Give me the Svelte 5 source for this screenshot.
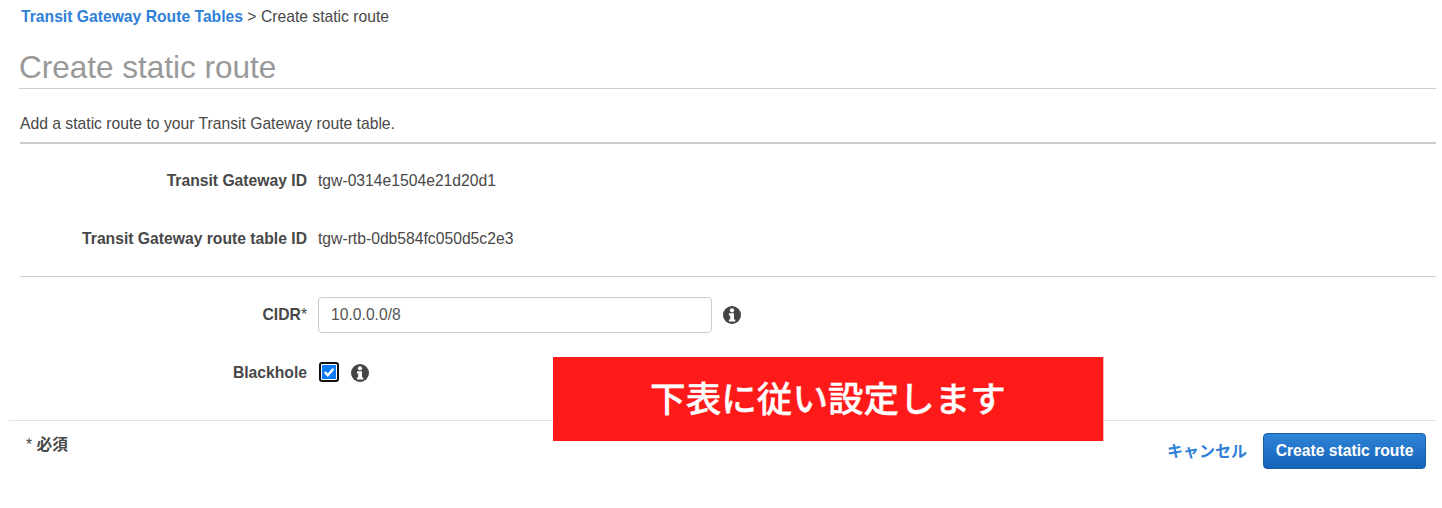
<script>
  const details = [
    { label: 'Transit Gateway ID', value: 'tgw-0314e1504e21d20d1' },
    { label: 'Transit Gateway route table ID', value: 'tgw-rtb-0db584fc050d5c2e3' }
  ]
</script>

{#snippet info()}
  <svg class="info" viewBox="0 0 18 18" width="18" height="18" aria-hidden="true">
    <circle cx="9" cy="9" r="9" fill="#444" />
    <circle cx="9" cy="4.3" r="2.1" fill="#fff" />
    <path d="M5.9 7.3h5.1v6.1h1.3v2.1H5.9v-2.1h1.3V9.4H5.9z" fill="#fff" />
  </svg>
{/snippet}

<main>
  <nav><a href="#top">Transit Gateway Route Tables</a> &gt; Create static route</nav>
  <h1>Create static route</h1>
  <p class="desc">Add a static route to your Transit Gateway route table.</p>

  <section class="details">
    {#each details as row}
      <div class="row">
        <span class="label">{row.label}</span>
        <span class="value">{row.value}</span>
      </div>
    {/each}
  </section>

  <section class="fields">
    <div class="row">
      <span class="label">CIDR<span class="star">*</span></span>
      <input type="text" value="10.0.0.0/8" />
      {@render info()}
    </div>
    <div class="row check">
      <span class="label">Blackhole</span>
      <span class="box">
        <svg viewBox="0 0 14 14" width="14" height="14" aria-hidden="true">
          <path d="M2.8 7.2l3 3L11.4 3.8" fill="none" stroke="#fff" stroke-width="2.4" />
        </svg>
      </span>
      {@render info()}
    </div>
  </section>

  <footer>
    <span class="required"><span class="star">*</span> 必須</span>
    <div class="actions">
      <a class="cancel" href="#top">キャンセル</a>
      <button type="button">Create static route</button>
    </div>
  </footer>

  <div class="banner">下表に従い設定します</div>
</main>

<style>
  :global(body) {
    background: #fff;
  }
  main {
    position: relative;
    height: 508px;
    box-sizing: border-box;
    padding: 0 6px 0 9px;
    font-family: "Liberation Sans", "Noto Sans CJK JP", sans-serif;
    font-size: 15.7px;
    color: #484848;
  }
  a {
    color: #2f80d8;
    font-weight: 700;
    text-decoration: none;
  }
  nav {
    height: 33px;
    line-height: 33px;
    padding-left: 12px;
  }
  h1 {
    margin: 0 0 0 10px;
    height: 56px;
    box-sizing: border-box;
    padding-top: 16px;
    line-height: 37px;
    font-size: 31.5px;
    font-weight: 400;
    color: #999;
    border-bottom: 1px solid #ccc;
  }
  .desc {
    margin: 0 0 0 11px;
    height: 55px;
    box-sizing: border-box;
    padding: 26px 0 0;
    line-height: 17px;
    border-bottom: 2px solid #ccc;
  }
  .details {
    margin-left: 11px;
    height: 133px;
    box-sizing: border-box;
    padding-top: 8px;
    border-bottom: 1px solid #ccc;
  }
  .details .row {
    height: 58px;
  }
  .row {
    display: flex;
    align-items: center;
  }
  .label {
    flex: 0 0 287px;
    text-align: right;
    font-weight: 700;
    margin-right: 11px;
  }
  .star {
    font-weight: 400;
  }
  .fields {
    height: 144px;
    box-sizing: border-box;
    padding: 20px 0 0 11px;
    border-bottom: 1px solid #e1e1e1;
  }
  .fields .row {
    height: 36px;
  }
  .fields .check {
    margin-top: 22px;
  }
  input {
    width: 394px;
    height: 36px;
    box-sizing: border-box;
    padding: 0 12px;
    border: 1px solid #ccc;
    border-radius: 4px;
    font: inherit;
    color: #555;
    outline: none;
  }
  .info {
    margin-left: 11px;
  }
  .box {
    display: flex;
    width: 14px;
    height: 14px;
    margin: 0 3px 3px 3px;
    background: #0b7bf6;
    border: 1px solid #fff;
    outline: 2px solid #111;
    border-radius: 1px;
  }
  footer {
    display: flex;
    justify-content: space-between;
    padding: 12px 10px 0 17px;
  }
  .required {
    font-weight: 700;
    line-height: 24px;
  }
  .actions {
    display: flex;
    align-items: center;
    gap: 16px;
  }
  .cancel {
    font-size: 16px;
    margin-top: -3px;
  }
  button {
    width: 163px;
    height: 36px;
    border: 1px solid #1a5ea8;
    border-radius: 4px;
    background: linear-gradient(#2f84d8, #1463b8);
    color: #fff;
    font: 700 15.7px "Liberation Sans", sans-serif;
  }
  .banner {
    position: absolute;
    left: 553px;
    top: 357px;
    box-sizing: border-box;
    width: 551px;
    height: 84px;
    line-height: 87px;
    text-align: center;
    background: #ff1a1a;
    border-right: 1px solid #ffb0b0;
    color: #fff;
    font-size: 35.6px;
    font-weight: 500;
    -webkit-text-stroke: 0.3px #fff;
  }
</style>
